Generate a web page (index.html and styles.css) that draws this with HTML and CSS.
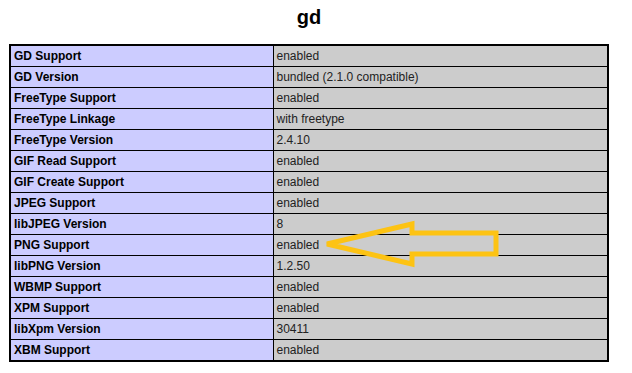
FILE: index.html
```html
<!DOCTYPE html>
<html>
<head>
<meta charset="utf-8">
<link rel="stylesheet" href="styles.css">
</head>
<body>
<div class="page">
  <h2 class="title">gd</h2>
  <table class="info">
    <tr><td class="e">GD Support</td><td class="v">enabled</td></tr>
    <tr><td class="e">GD Version</td><td class="v">bundled (2.1.0 compatible)</td></tr>
    <tr><td class="e">FreeType Support</td><td class="v">enabled</td></tr>
    <tr><td class="e">FreeType Linkage</td><td class="v">with freetype</td></tr>
    <tr><td class="e">FreeType Version</td><td class="v">2.4.10</td></tr>
    <tr><td class="e">GIF Read Support</td><td class="v">enabled</td></tr>
    <tr><td class="e">GIF Create Support</td><td class="v">enabled</td></tr>
    <tr><td class="e">JPEG Support</td><td class="v">enabled</td></tr>
    <tr><td class="e">libJPEG Version</td><td class="v">8</td></tr>
    <tr><td class="e">PNG Support</td><td class="v">enabled</td></tr>
    <tr><td class="e">libPNG Version</td><td class="v">1.2.50</td></tr>
    <tr><td class="e">WBMP Support</td><td class="v">enabled</td></tr>
    <tr><td class="e">XPM Support</td><td class="v">enabled</td></tr>
    <tr><td class="e">libXpm Version</td><td class="v">30411</td></tr>
    <tr><td class="e">XBM Support</td><td class="v">enabled</td></tr>
  </table>
  <svg class="arrow" width="180" height="50" viewBox="0 0 180 50">
    <polygon points="7,26 92,6 92,15 176,15 176,36 92,36 92,46" fill="none" stroke="#fdc313" stroke-width="5" stroke-linejoin="miter"/>
  </svg>
</div>
</body>
</html>
```
FILE: styles.css
```css
html, body {
  margin: 0;
  padding: 0;
  background: #fff;
}
.page {
  position: relative;
  width: 600px;
  padding: 6px 0 0 9px;
  font-family: "Liberation Sans", Arial, sans-serif;
}
.title {
  margin: 0 0 15px 0;
  font-size: 20px;
  font-weight: bold;
  text-align: center;
  line-height: 23px;
  color: #000;
}
.info {
  border-collapse: collapse;
  width: 600px;
  border: 2px solid #000;
}
.info td {
  border: 1px solid #000;
  height: 20px;
  padding: 0 0 0 3px;
  font-size: 12px;
  line-height: 20px;
  color: #000;
  box-sizing: border-box;
}
.info td.e {
  background: #ccccff;
  font-weight: bold;
  width: 263px;
}
.info td.v {
  background: #cccccc;
  color: #222;
}
.arrow {
  position: absolute;
  left: 320px;
  top: 218px;
}
```
